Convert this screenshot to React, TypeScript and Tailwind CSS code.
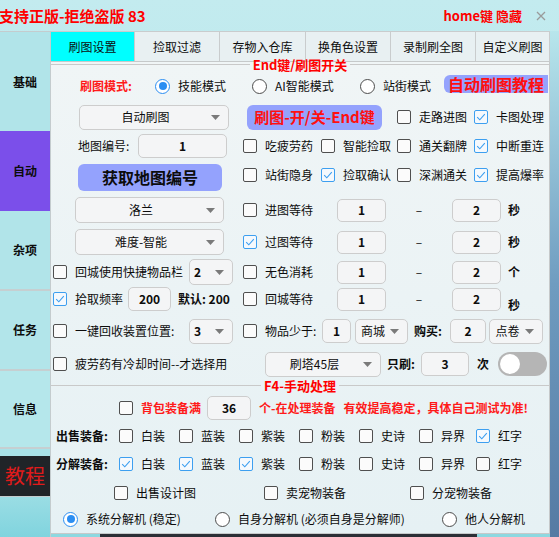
import type { ReactNode } from "react";

// checkbox square, blue tick when on
function Box({ on }: { on?: boolean }) {
  if (on) {
    return (
      <span className="flex h-[14px] w-[14px] shrink-0 items-center justify-center rounded-[2px] border border-[#3d9ff0] bg-[#f5f9fd]">
        <svg width="10" height="8" viewBox="0 0 10 8" fill="none" stroke="#3d9ff0" strokeWidth="1.1">
          <path d="M1.2 4.2 L3.8 6.8 L8.8 1.2" />
        </svg>
      </span>
    );
  }
  return <span className="h-[14px] w-[14px] shrink-0 rounded-[2px] border border-[#4f4f4f] bg-[#fbfbfb]" />;
}

function Radio({ on }: { on?: boolean }) {
  if (on) {
    return (
      <span className="flex h-[15px] w-[15px] shrink-0 items-center justify-center rounded-full border-[1.5px] border-[#2b8ef2] bg-white">
        <span className="h-[8px] w-[8px] rounded-full bg-[#2b8ef2]" />
      </span>
    );
  }
  return <span className="h-[15px] w-[15px] shrink-0 rounded-full border border-[#4d4d4d] bg-white" />;
}

function Check({ on, label, w = "", cls = "" }: { on?: boolean; label: ReactNode; w?: string; cls?: string }) {
  return (
    <label className={`flex shrink-0 items-center gap-[8px] ${w}`}>
      <Box on={on} />
      <span className={`whitespace-nowrap ${cls}`}>{label}</span>
    </label>
  );
}

function Choice({ on, label, w = "" }: { on?: boolean; label: string; w?: string }) {
  return (
    <label className={`flex shrink-0 items-center gap-[8px] ${w}`}>
      <Radio on={on} />
      <span className="whitespace-nowrap">{label}</span>
    </label>
  );
}

function Field({ value, w, h = "h-[24px]" }: { value: string; w: string; h?: string }) {
  return (
    <span className={`flex shrink-0 items-center justify-center rounded-[5px] border border-[#cdcdcd] bg-[#f4f5f6] font-bold ${w} ${h}`}>
      {value}
    </span>
  );
}

function Arrow() {
  return (
    <svg width="9" height="5" viewBox="0 0 9 5" className="shrink-0">
      <polygon points="0,0 9,0 4.5,5" fill="#7a7a7a" />
    </svg>
  );
}

function Drop({ value, w, h = "h-[25px]", start }: { value: string; w: string; h?: string; start?: boolean }) {
  return (
    <span className={`flex shrink-0 items-center rounded-[5px] border border-[#cdcdcd] bg-[#f4f5f6] pr-[8px] ${w} ${h}`}>
      <span className={`flex-1 whitespace-nowrap ${start ? "pl-[4px] font-bold" : "text-center"}`}>{value}</span>
      <Arrow />
    </span>
  );
}

function Legend({ title, h }: { title: string; h: string }) {
  return (
    <div className={`flex items-center ${h}`}>
      <span className="h-px flex-1 bg-[#c9c9c9]" />
      <span className="px-[3px] text-[13px] font-bold leading-none text-[#ff0000]">{title}</span>
      <span className="h-px flex-1 bg-[#c9c9c9]" />
    </div>
  );
}

function Wait({ label, on, unit, unitCls = "" }: { label: string; on?: boolean; unit: string; unitCls?: string }) {
  return (
    <div className="flex items-center">
      <Check on={on} label={label} w="w-[94px]" />
      <Field value="1" w="w-[49px]" h="h-[23px]" />
      <span className="flex w-[66px] justify-center">–</span>
      <Field value="2" w="w-[49px]" h="h-[23px]" />
      <span className={`ml-[7px] font-bold ${unitCls}`}>{unit}</span>
    </div>
  );
}

const tabs = [
  { name: "刷图设置", w: "w-[84px]" },
  { name: "捡取过滤", w: "w-[85px]" },
  { name: "存物入仓库", w: "w-[86px]" },
  { name: "换角色设置", w: "w-[85px]" },
  { name: "录制刷全图", w: "w-[85px]" },
  { name: "自定义刷图", w: "w-[74px]" },
];

const grades = ["白装", "蓝装", "紫装", "粉装", "史诗", "异界", "红字"];
const gradeW = ["w-[60px]", "w-[60px]", "w-[60px]", "w-[60px]", "w-[60px]", "w-[57px]", ""];
const sellOn = [false, false, false, false, false, false, true];
const breakOn = [true, true, true, false, false, false, false];

export default function App() {
  return (
    <div className="flex h-[537px] w-[559px] flex-col overflow-hidden bg-gradient-to-b from-[#c3ebef] via-[#b3e5ea] to-[#8dd8e0] font-['Noto_Sans_CJK_SC','Noto_Sans',sans-serif] text-[12px] leading-[16px] text-[#0c0c0c]">
      {/* title bar */}
      <header className="flex h-[31px] shrink-0 items-center">
        <span className="-ml-[1px] text-[15px] font-bold text-[#ff0000]">支持正版-拒绝盗版 83</span>
        <span className="ml-auto text-[13px] font-bold text-[#ff0000]">home键 隐藏</span>
        <svg width="10" height="10" viewBox="0 0 10 10" className="ml-[14px] mr-[13px]" stroke="#9a9a9a" strokeWidth="1.3">
          <path d="M1 1 L9 9 M9 1 L1 9" />
        </svg>
      </header>

      <div className="flex flex-1">
        {/* side menu */}
        <nav className="flex w-[51px] shrink-0 flex-col border-r border-t border-[#c4ccce] font-bold">
          <div className="flex h-[99px] items-center justify-center bg-[#b1e4e9]">基础</div>
          <div className="flex h-[80px] items-center justify-center bg-[#7b4fea]">自动</div>
          <div className="flex h-[80px] items-center justify-center border-b-2 border-[#c6cfd1] bg-[#b1e4e9]">杂项</div>
          <div className="flex h-[80px] items-center justify-center border-b-2 border-[#c6cfd1] bg-[#b2e5ea]">任务</div>
          <div className="flex h-[78px] items-center justify-center border-b-2 border-[#c6cfd1] bg-[#b5e7eb]">信息</div>
          <div className="h-[7px] bg-[#a9e2e8]" />
          <div className="flex h-[40px] items-center justify-center bg-[#202428] text-[20px] font-normal text-[#e01b1b]">教程</div>
          <div className="flex-1 border-t border-[#c4ccce] bg-gradient-to-b from-[#9adde4] to-[#80d4de]" />
        </nav>

        <main className="flex w-[499px] shrink-0 flex-col">
          <div className="flex h-[30px] shrink-0">
            {tabs.map((t, i) => (
              <div
                key={t.name}
                className={`flex items-center justify-center border-r border-t border-[#c9cccd] ${t.w} ${i === 0 ? "bg-[#00ffff]" : "bg-[#e8f0f2]"}`}
              >
                {t.name}
              </div>
            ))}
          </div>

          <section className="flex h-[473px] shrink-0 flex-col border-y border-r border-[#c6c9ca] bg-gradient-to-b from-[#f0f5f6] to-[#e6f1f4]">
            <Legend title="End键/刷图开关" h="h-[4px]" />

            {/* mode */}
            <div className="flex h-[35px] items-center pl-[29px] pt-[5px]">
              <span className="w-[75px] font-bold text-[#ff1a1a]">刷图模式:</span>
              <Choice on label="技能模式" w="w-[97px]" />
              <Choice label="AI智能模式" w="w-[108px]" />
              <Choice label="站街模式" w="w-[84px]" />
              <span className="mt-[4px] flex h-[18px] w-[104px] items-center justify-center self-start whitespace-nowrap rounded-l-[6px] bg-[#94a2fd] text-[16px] font-bold text-[#ff1010]">
                自动刷图教程
              </span>
            </div>

            <div className="flex h-[32px] items-center">
              <div className="flex w-[192px] pl-[28px]">
                <Drop value="自动刷图" w="w-[150px]" />
              </div>
              <div className="flex w-[154px] pl-[4px]">
                <span className="flex h-[25px] w-[135px] items-center justify-center whitespace-nowrap rounded-[6px] bg-[#94a2fd] text-[15px] font-bold text-[#ff1010]">
                  刷图-开/关-End键
                </span>
              </div>
              <Check label="走路进图" w="w-[77px]" />
              <Check on label="卡图处理" />
            </div>

            <div className="flex h-[26px] items-center">
              <div className="flex w-[192px] items-center pl-[27px]">
                <span className="w-[60px]">地图编号:</span>
                <Field value="1" w="w-[89px]" />
              </div>
              <Check label="吃疲劳药" w="w-[78px]" />
              <Check label="智能捡取" w="w-[76px]" />
              <Check label="通关翻牌" w="w-[77px]" />
              <Check on label="中断重连" />
            </div>

            <div className="flex h-[36px] items-center">
              <div className="flex w-[192px] pl-[27px]">
                <span className="flex h-[27px] w-[144px] items-center justify-center rounded-[6px] bg-[#94a2fd] text-[16px] font-bold">
                  获取地图编号
                </span>
              </div>
              <div className="flex items-center pb-[4px]">
                <Check label="站街隐身" w="w-[78px]" />
                <Check on label="捡取确认" w="w-[76px]" />
                <Check label="深渊通关" w="w-[77px]" />
                <Check on label="提高爆率" />
              </div>
            </div>

            <div className="flex h-[30px] items-center">
              <div className="flex w-[192px] pl-[24px]">
                <Drop value="洛兰" w="w-[149px]" h="h-[26px]" />
              </div>
              <Wait label="进图等待" unit="秒" />
            </div>

            <div className="flex h-[34px] items-center">
              <div className="flex w-[192px] pl-[24px]">
                <Drop value="难度-智能" w="w-[149px]" h="h-[26px]" />
              </div>
              <Wait on label="过图等待" unit="秒" />
            </div>

            <div className="flex h-[26px] items-center">
              <div className="flex w-[192px] items-center pl-[2px]">
                <Check label="回城使用快捷物品栏" w="w-[136px]" />
                <Drop value="2" w="w-[44px]" h="h-[26px]" start />
              </div>
              <Wait label="无色消耗" unit="个" />
            </div>

            <div className="flex h-[28px] items-center">
              <div className="flex w-[192px] items-center pl-[2px]">
                <Check on label="拾取频率" w="w-[75px]" />
                <Field value="200" w="w-[43px]" />
                <span className="ml-[7px] whitespace-nowrap font-bold">默认: 200</span>
              </div>
              <Wait label="回城等待" unit="秒" unitCls="pt-[12px]" />
            </div>

            <div className="flex h-[36px] items-center">
              <div className="flex w-[192px] items-center pl-[2px]">
                <Check label="一键回收装置位置:" w="w-[136px]" />
                <Drop value="3" w="w-[44px]" start />
              </div>
              <Check label="物品少于:" w="w-[79px]" />
              <Field value="1" w="w-[29px]" />
              <span className="ml-[4px] flex">
                <Drop value="商城" w="w-[53px]" />
              </span>
              <span className="w-[42px] pl-[6px] font-bold">购买:</span>
              <Field value="2" w="w-[36px]" />
              <span className="ml-[3px] flex">
                <Drop value="点卷" w="w-[54px]" />
              </span>
            </div>

            <div className="flex h-[30px] items-center">
              <div className="flex w-[192px] items-center pl-[2px]">
                <Check label="疲劳药有冷却时间--才选择用" />
              </div>
              <div className="flex items-center pl-[22px]">
                <Drop value="刷塔45层" w="w-[116px]" />
                <span className="w-[40px] pl-[6px] font-bold">只刷:</span>
                <Field value="3" w="w-[48px]" />
                <span className="w-[29px] pl-[8px] font-bold">次</span>
                <span className="flex h-[24px] w-[49px] items-center rounded-full bg-[#b5b5b5] pl-[2px]">
                  <span className="h-[20px] w-[20px] rounded-full bg-white" />
                </span>
              </div>
            </div>

            <Legend title="F4-手动处理" h="h-[12px]" />

            <div className="flex h-[34px] items-center pl-[68px]">
              <Check label="背包装备满" w="w-[88px]" cls="font-bold text-[#ff1a1a]" />
              <Field value="36" w="w-[44px]" />
              <span className="ml-[8px] whitespace-pre font-bold text-[#ff1a1a]">个-在处理装备   有效提高稳定，具体自己测试为准!</span>
            </div>

            <div className="flex h-[22px] items-center pl-[5px]">
              <span className="w-[63px] font-bold">出售装备:</span>
              {grades.map((g, i) => (
                <Check key={g} on={sellOn[i]} label={g} w={gradeW[i]} />
              ))}
            </div>

            <div className="flex h-[34px] items-center pl-[5px]">
              <span className="w-[63px] font-bold">分解装备:</span>
              {grades.map((g, i) => (
                <Check key={g} on={breakOn[i]} label={g} w={gradeW[i]} />
              ))}
            </div>

            <div className="flex h-[24px] items-center pl-[63px]">
              <Check label="出售设计图" w="w-[150px]" />
              <Check label="卖宠物装备" w="w-[146px]" />
              <Check label="分宠物装备" />
            </div>

            <div className="flex h-[28px] items-center pl-[12px]">
              <Choice on label="系统分解机 (稳定)" w="w-[152px]" />
              <Choice label="自身分解机 (必须自身是分解师)" w="w-[227px]" />
              <Choice label="他人分解机" />
            </div>
          </section>

          <div className="ml-[49px] h-[3px] w-[377px] bg-[#2b2f36]" />
        </main>

        {/* desktop showing past the window edge */}
        <div className="flex-1 bg-gradient-to-b from-[#b8e6ec] via-[#6f9cc0] to-[#557aa3]" />
      </div>
    </div>
  );
}
